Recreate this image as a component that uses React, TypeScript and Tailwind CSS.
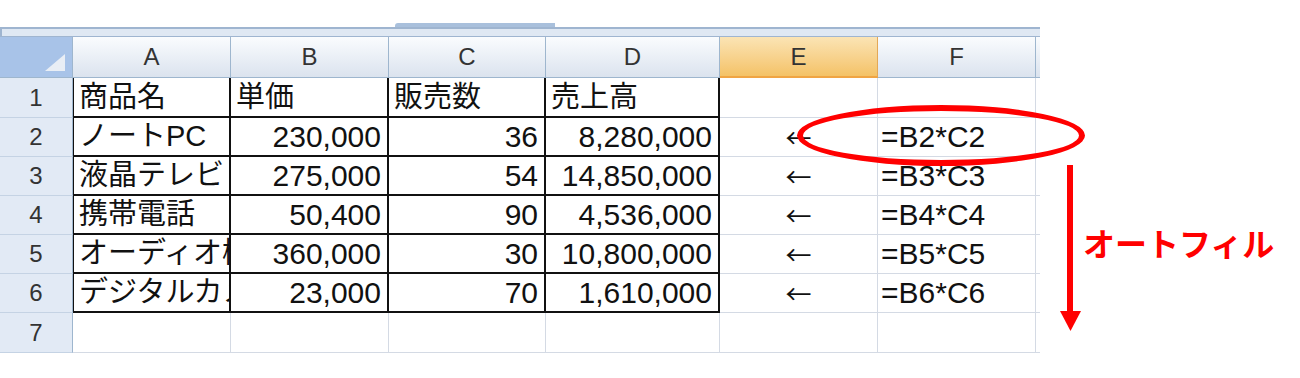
import React from 'react';

const columns = ['A', 'B', 'C', 'D', 'E', 'F'];

const rows: string[][] = [
  ['商品名', '単価', '販売数', '売上高', '', ''],
  ['ノートPC', '230,000', '36', '8,280,000', '←', '=B2*C2'],
  ['液晶テレビ', '275,000', '54', '14,850,000', '←', '=B3*C3'],
  ['携帯電話', '50,400', '90', '4,536,000', '←', '=B4*C4'],
  ['オーディオ機器', '360,000', '30', '10,800,000', '←', '=B5*C5'],
  ['デジタルカメラ', '23,000', '70', '1,610,000', '←', '=B6*C6'],
  ['', '', '', '', '', ''],
];

const font = "font-['Liberation_Sans','Noto_Sans_CJK_JP',sans-serif]";

const HeaderCell: React.FC<{ label: string; selected?: boolean }> = ({ label, selected }) => (
  <div
    className={
      selected
        ? 'flex items-center justify-center border-r border-b-2 border-r-[#e3a857] border-b-[#f0a443] bg-linear-to-b from-[#fbe4b4] to-[#f4c266] text-[24px] text-[#333]'
        : 'flex items-center justify-center border-r border-b border-[#9eb6ce] bg-linear-to-b from-[#fafcfe] to-[#dbe3ee] text-[24px] text-[#333]'
    }
  >
    {label}
  </div>
);

const DataCell: React.FC<{ value: string; row: number; col: number }> = ({ value, row, col }) => {
  const inBlock = row < 6 && col < 4;
  const isText = col === 0 || row === 0;
  let size = isText && col < 4 ? 'text-[29px]' : 'text-[30px]';
  let align = 'justify-start pl-[5px] leading-none';
  if (col === 4) {
    align = "justify-center leading-none font-['Noto_Sans_CJK_JP',sans-serif]";
    size = 'text-[26px]';
  } else if (col === 5) align = 'justify-start pl-[3px] leading-none';
  else if (!isText) align = 'justify-end pr-[6px] leading-none';

  const border = inBlock
    ? `border-r-2 border-b-2 border-[#111] ${col === 0 ? 'border-l border-l-[#111]' : ''}`
    : 'border-r border-b border-[#d4dae4]';

  return (
    <div
      className={`flex items-center overflow-hidden whitespace-nowrap bg-white text-[#111] ${size} ${align} ${border}`}
    >
      {value}
    </div>
  );
};

const App: React.FC = () => {
  return (
    <div className={`relative w-[1300px] h-[378px] overflow-hidden bg-white ${font}`}>
      <div className="h-[27px] flex items-end">
        <div className="ml-[395px] w-[160px] h-[4px] bg-[#a9c0dc] rounded-tl-[3px]" />
      </div>

      <div className="w-[1040px]">
        <div className="h-[10px] border-t-2 border-b border-l-2 border-[#9fb5d0] bg-[#dfe8f3]" />

        <div className="grid grid-cols-[73px_158px_158px_157px_174px_158px_158px_4px] grid-rows-[41px_40px_39px_39px_39px_39px_39px_40px]">
          <div className="flex items-end justify-end pr-[7px] pb-[6px] border-r border-b border-[#9eb6ce] bg-[#a8c3e8]">
            <svg width="20" height="17" viewBox="0 0 20 17">
              <polygon points="20,0 20,17 0,17" fill="#e9eef5" />
            </svg>
          </div>
          {columns.map((c) => (
            <HeaderCell key={c} label={c} selected={c === 'E'} />
          ))}
          <div className="border-b border-[#9eb6ce] bg-linear-to-b from-[#fafcfe] to-[#dbe3ee]" />

          {rows.map((row, r) => (
            <React.Fragment key={r}>
              <div className="flex items-center justify-center border-r border-b border-r-[#9eb6ce] border-b-[#c5d3e4] bg-[#e2eaf5] text-[24px] text-[#333]">
                {r + 1}
              </div>
              {row.map((v, c) => (
                <DataCell key={c} value={v} row={r} col={c} />
              ))}
              <div className="border-b border-[#d4dae4] bg-white" />
            </React.Fragment>
          ))}
        </div>
      </div>

      <div className="absolute left-[797px] top-[105px] w-[288px] h-[61px] rounded-[50%] border-[6px] border-[#f00]" />

      <svg className="absolute left-[1059px] top-[165px]" width="23" height="167" viewBox="0 0 23 167">
        <rect x="8" y="0" width="6" height="150" fill="#f00" />
        <polygon points="1,146 22,146 11.5,166" fill="#f00" />
      </svg>

      <div className="absolute left-[1083px] top-[226px] text-[32px] leading-none text-[#f00] font-['Noto_Sans_CJK_JP',sans-serif] font-bold">
        オートフィル
      </div>
    </div>
  );
};

export default App;
